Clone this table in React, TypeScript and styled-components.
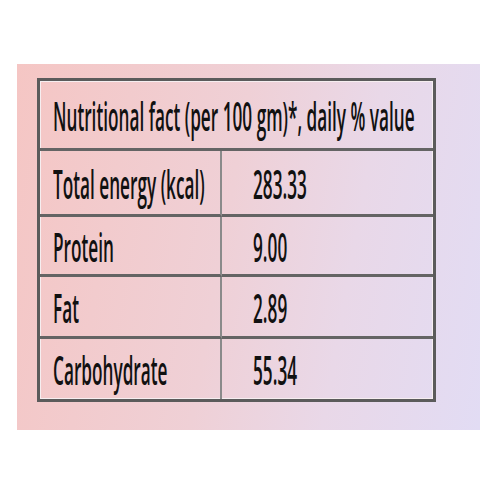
import styled, { createGlobalStyle } from "styled-components";

const GlobalStyle = createGlobalStyle`
  html, body {
    margin: 0;
    padding: 0;
    background: #ffffff;
  }
`;

const Page = styled.div`
  width: 500px;
  height: 500px;
  padding: 64px 20px 70px 17px;
  box-sizing: border-box;
`;

const Panel = styled.div`
  width: 463px;
  height: 366px;
  padding: 14px 0 0 20px;
  box-sizing: border-box;
  background: linear-gradient(100deg, #f5c6c4 0%, #efd0d6 45%, #e9d8e8 70%, #e2dcf4 100%);
`;

const Table = styled.div`
  width: 399px;
  display: grid;
  grid-template-columns: 182px 1fr;
  grid-template-rows: 70px 66px 60px 62px 60px;
  border: 3px solid #5b5b5b;
  box-shadow: inset 0 0 0 1px #f6eef0;
  box-sizing: border-box;
`;

const Cell = styled.div<{ $span?: boolean; $last?: boolean; $left?: boolean }>`
  grid-column: ${(p) => (p.$span ? "1 / 3" : "auto")};
  display: flex;
  align-items: center;
  padding-left: ${(p) => (p.$left ? "13px" : "31px")};
  border-bottom: ${(p) => (p.$last ? "none" : "3px solid #646464")};
  border-right: ${(p) => (p.$left && !p.$span ? "2px solid #8a8a8a" : "none")};
  overflow: visible;
  min-width: 0;
`;

const Label = styled.span<{ $scale: number }>`
  display: inline-block;
  font-family: "Open Sans", "DejaVu Sans", sans-serif;
  font-size: 40px;
  font-weight: 600;
  line-height: 1;
  color: #111;
  white-space: nowrap;
  transform: scaleX(${(p) => p.$scale});
  transform-origin: left center;
  margin-top: 2px;
`;

const rows = [
  { name: "Total energy (kcal)", value: "283.33" },
  { name: "Protein", value: "9.00" },
  { name: "Fat", value: "2.89" },
  { name: "Carbohydrate", value: "55.34" },
];

export default function App() {
  return (
    <>
      <GlobalStyle />
      <Page>
        <Panel>
          <Table>
            <Cell $span $left>
              <Label $scale={0.43}>Nutritional fact (per 100 gm)*, daily % value</Label>
            </Cell>
            {rows.map((r, i) => [
              <Cell key={r.name} $left $last={i === rows.length - 1}>
                <Label $scale={0.43}>{r.name}</Label>
              </Cell>,
              <Cell key={r.value} $last={i === rows.length - 1}>
                <Label $scale={0.43}>{r.value}</Label>
              </Cell>,
            ])}
          </Table>
        </Panel>
      </Page>
    </>
  );
}
